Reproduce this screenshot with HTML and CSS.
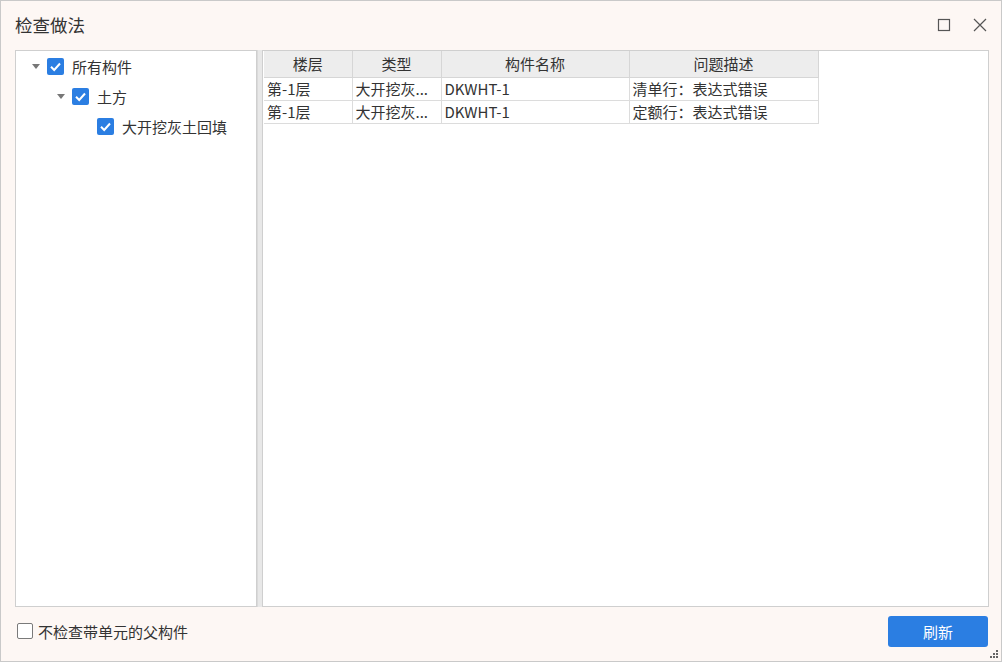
FILE: index.html
```html
<!DOCTYPE html>
<html lang="zh-CN">
<head>
<meta charset="utf-8">
<title>检查做法</title>
<link rel="stylesheet" href="styles.css">
</head>
<body>
<div class="window">
  <div class="titlebar">
    <div class="title">检查做法</div>
    <div class="controls">
      <svg class="ctl" width="14" height="14" viewBox="0 0 14 14"><rect x="1.5" y="1.5" width="11" height="11" fill="none" stroke="#555" stroke-width="1.2"/></svg>
      <svg class="ctl" width="16" height="16" viewBox="0 0 16 16"><path d="M2 2 L14 14 M14 2 L2 14" stroke="#555" stroke-width="1.2" fill="none"/></svg>
    </div>
  </div>
  <div class="main">
    <div class="tree">
      <div class="node lv1"><span class="arrow"></span><span class="cb on"><svg width="17" height="17" viewBox="0 0 17 17"><path d="M4 8.8 L7.2 12 L13 5.5" stroke="#fff" stroke-width="2" fill="none"/></svg></span><span class="lbl">所有构件</span></div>
      <div class="node lv2"><span class="arrow"></span><span class="cb on"><svg width="17" height="17" viewBox="0 0 17 17"><path d="M4 8.8 L7.2 12 L13 5.5" stroke="#fff" stroke-width="2" fill="none"/></svg></span><span class="lbl">土方</span></div>
      <div class="node lv3"><span class="cb on"><svg width="17" height="17" viewBox="0 0 17 17"><path d="M4 8.8 L7.2 12 L13 5.5" stroke="#fff" stroke-width="2" fill="none"/></svg></span><span class="lbl">大开挖灰土回填</span></div>
    </div>
    <div class="splitter"></div>
    <div class="grid">
      <table>
        <colgroup><col class="c1"><col class="c2"><col class="c3"><col class="c4"></colgroup>
        <thead><tr><th>楼层</th><th>类型</th><th>构件名称</th><th>问题描述</th></tr></thead>
        <tbody>
          <tr><td>第-1层</td><td>大开挖灰...</td><td>DKWHT-1</td><td>清单行：表达式错误</td></tr>
          <tr><td>第-1层</td><td>大开挖灰...</td><td>DKWHT-1</td><td>定额行：表达式错误</td></tr>
        </tbody>
      </table>
    </div>
  </div>
  <div class="footer">
    <label class="check"><span class="box"></span><span>不检查带单元的父构件</span></label>
    <button class="btn">刷新</button>
  </div>
  <div class="grip">
    <svg width="10" height="10" viewBox="0 0 10 10" fill="#666"><rect x="7" y="1" width="2" height="2"/><rect x="4" y="4" width="2" height="2"/><rect x="7" y="4" width="2" height="2"/><rect x="1" y="7" width="2" height="2"/><rect x="4" y="7" width="2" height="2"/><rect x="7" y="7" width="2" height="2"/></svg>
  </div>
</div>
</body>
</html>
```
FILE: styles.css
```css
* { box-sizing: border-box; }
html, body { margin: 0; padding: 0; }
body {
  font-family: "Noto Sans CJK SC", "Noto Sans", sans-serif;
  color: #333;
  font-size: 15px;
}
.window {
  position: relative;
  width: 1002px;
  height: 662px;
  border: 1px solid #c9c9c9;
  background: #fdf7f4;
  display: flex;
  flex-direction: column;
  padding: 0 12px 0 14px;
}
.titlebar {
  height: 49px;
  display: flex;
  align-items: center;
  justify-content: space-between;
}
.title {
  font-size: 17.5px;
  color: #333;
  padding-bottom: 2px;
}
.controls {
  display: flex;
  align-items: center;
  gap: 21px;
  padding-right: 1px;
  padding-bottom: 2px;
}
.ctl { display: block; }
.main {
  height: 557px;
  display: flex;
}
.tree {
  width: 242px;
  border: 1px solid #cfcfcf;
  background: #fff;
  padding-top: 0;
}
.node {
  height: 30px;
  display: flex;
  align-items: center;
}
.lv1 { padding-left: 16px; }
.lv2 { padding-left: 41px; }
.lv3 { padding-left: 81px; }
.arrow {
  width: 0; height: 0;
  border-left: 4px solid transparent;
  border-right: 4px solid transparent;
  border-top: 5px solid #777;
  margin-right: 7px;
  margin-top: 1px;
}
.cb {
  width: 17px; height: 17px;
  border-radius: 2px;
  display: inline-block;
}
.cb.on { background: #2b7ee2; }
.cb svg { display: block; }
.lbl { margin-left: 8px; font-size: 15px; }
.splitter {
  width: 5px;
  background: #e8e8e8;
  border-left: 1px solid #dadada;
}
.grid {
  flex: 1;
  border: 1px solid #cfcfcf;
  background: #fff;
  padding: 0 0 0 1px;
}
table {
  border-collapse: collapse;
  table-layout: fixed;
  width: 554px;
  font-size: 15px;
}
.c1 { width: 88px; }
.c2 { width: 89px; }
.c3 { width: 188px; }
.c4 { width: 189px; }
th {
  height: 26px;
  background: #ededed;
  font-weight: normal;
  text-align: center;
  border: 1px solid #d6d6d6;
  border-top: none;
  padding: 0;
}
th:first-child { border-left: none; }
td {
  height: 23px;
  border: 1px solid #dcdcdc;
  padding: 0 0 0 3px;
  white-space: nowrap;
  overflow: hidden;
  line-height: 20px;
}
td:first-child { border-left: none; }
.footer {
  flex: 1;
  display: flex;
  align-items: center;
  justify-content: space-between;
  padding: 0 1px 6px 2px;
}
.check {
  display: flex;
  align-items: center;
  gap: 5px;
  font-size: 15px;
  color: #333;
}
.box {
  width: 16px; height: 16px;
  border: 1px solid #7a7a7a;
  border-radius: 2px;
  background: #fff;
}
.btn {
  width: 100px;
  height: 31px;
  background: #2b7ee2;
  color: #fff;
  border: none;
  border-radius: 3px;
  font-family: "Noto Sans CJK SC", sans-serif;
  font-size: 15px;
  padding: 0;
}
.grip {
  position: absolute;
  right: 2px;
  bottom: 2px;
  line-height: 0;
}
```
